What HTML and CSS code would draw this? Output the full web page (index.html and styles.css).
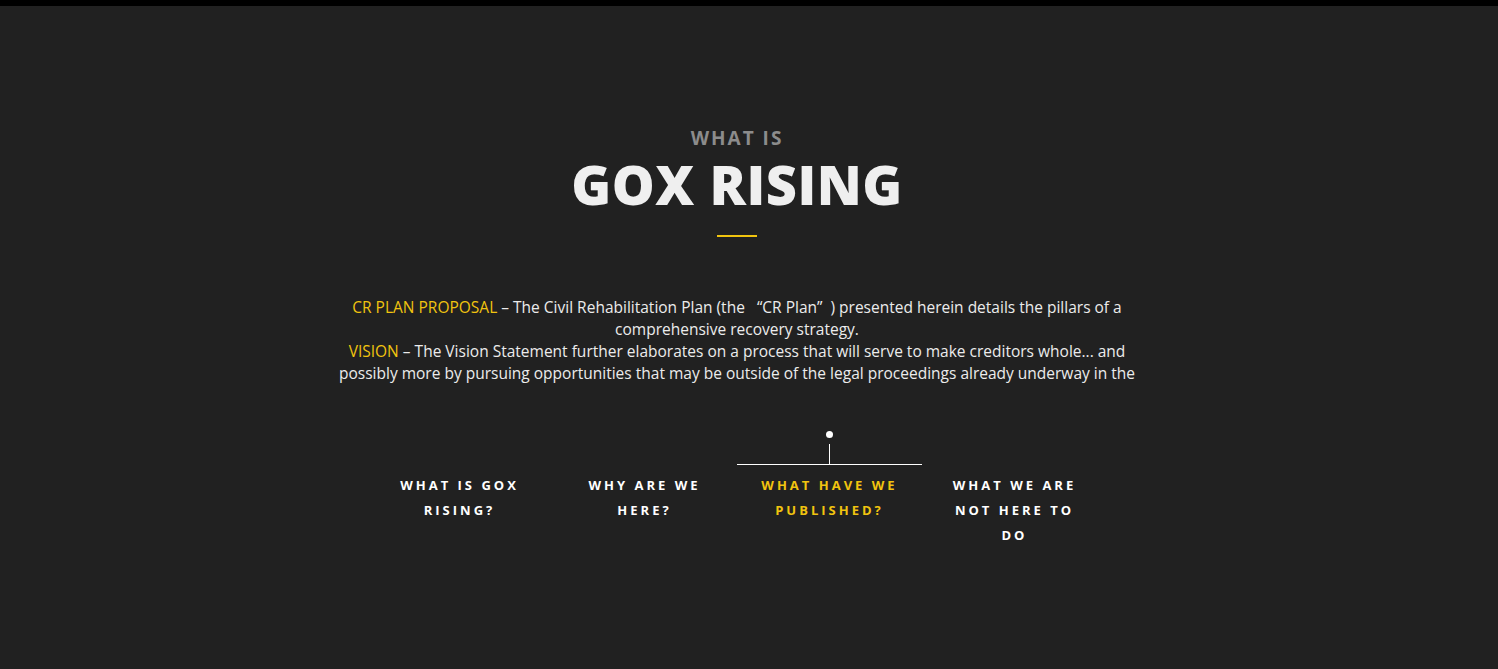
FILE: index.html
```html
<!DOCTYPE html>
<html>
<head>
<meta charset="utf-8">
<link rel="stylesheet" href="styles.css">
</head>
<body>
<div class="topbar"></div>
<main class="page">
  <section class="about">
    <p class="eyebrow">WHAT IS</p>
    <h1 class="title">GOX RISING</h1>
    <div class="rule"></div>
    <div class="intro">
      <span class="hl">CR PLAN PROPOSAL</span> – The Civil Rehabilitation Plan (the &nbsp; “CR Plan” &nbsp;) presented herein details the pillars of a comprehensive recovery strategy.<br>
      <span class="hl">VISION</span> – The Vision Statement further elaborates on a process that will serve to make creditors whole... and possibly more by pursuing opportunities that may be outside of the legal proceedings already underway in the Tokyo District Court.
    </div>
    <nav class="tabs">
      <div class="tab">WHAT IS GOX RISING?</div>
      <div class="tab">WHY ARE WE HERE?</div>
      <div class="tab active">WHAT HAVE WE PUBLISHED?</div>
      <div class="tab">WHAT WE ARE NOT HERE TO DO</div>
    </nav>
  </section>
</main>
</body>
</html>
```

FILE: styles.css
```css
html, body {
  margin: 0;
  padding: 0;
  background: #212121;
  height: 100%;
}
body {
  font-family: "Open Sans", "Noto Sans", sans-serif;
  color: #ededed;
}
.topbar {
  height: 6px;
  background: #000;
}
.page {
  width: 1474px;
}
.about {
  display: flex;
  flex-direction: column;
  align-items: center;
  padding-top: 121px;
}
.eyebrow {
  margin: 0;
  font-size: 19px;
  font-weight: 700;
  letter-spacing: 2px;
  color: #8c8c8c;
  line-height: 22px;
}
.title {
  margin: 4px 0 0;
  font-family: "Open Sans", sans-serif;
  font-size: 54px;
  font-weight: 800;
  color: #efefef;
  line-height: 62px;
  letter-spacing: 0.5px;
}
.rule {
  margin-top: 20px;
  width: 40px;
  height: 2px;
  background: #f1c40f;
}
.intro {
  margin-top: 59px;
  width: 810px;
  height: 88px;
  overflow: hidden;
  text-align: center;
  font-size: 15.5px;
  line-height: 22px;
  color: #ececec;
}
.hl {
  color: #f1c40f;
}
.tabs {
  margin-top: 80px;
  display: flex;
}
.tab {
  position: relative;
  width: 185px;
  box-sizing: border-box;
  padding: 9px 20px 0;
  text-align: center;
  font-size: 13px;
  font-weight: 700;
  letter-spacing: 3px;
  line-height: 25px;
  color: #fff;
}
.tab.active {
  color: #f1c40f;
  border-top: 1px solid #fff;
  padding-top: 8px;
}
.tab.active::before {
  content: "";
  position: absolute;
  left: 92px;
  top: -21px;
  width: 1px;
  height: 20px;
  background: #fff;
}
.tab.active::after {
  content: "";
  position: absolute;
  left: 89px;
  top: -34px;
  width: 7px;
  height: 7px;
  border-radius: 50%;
  background: #fff;
}
```
